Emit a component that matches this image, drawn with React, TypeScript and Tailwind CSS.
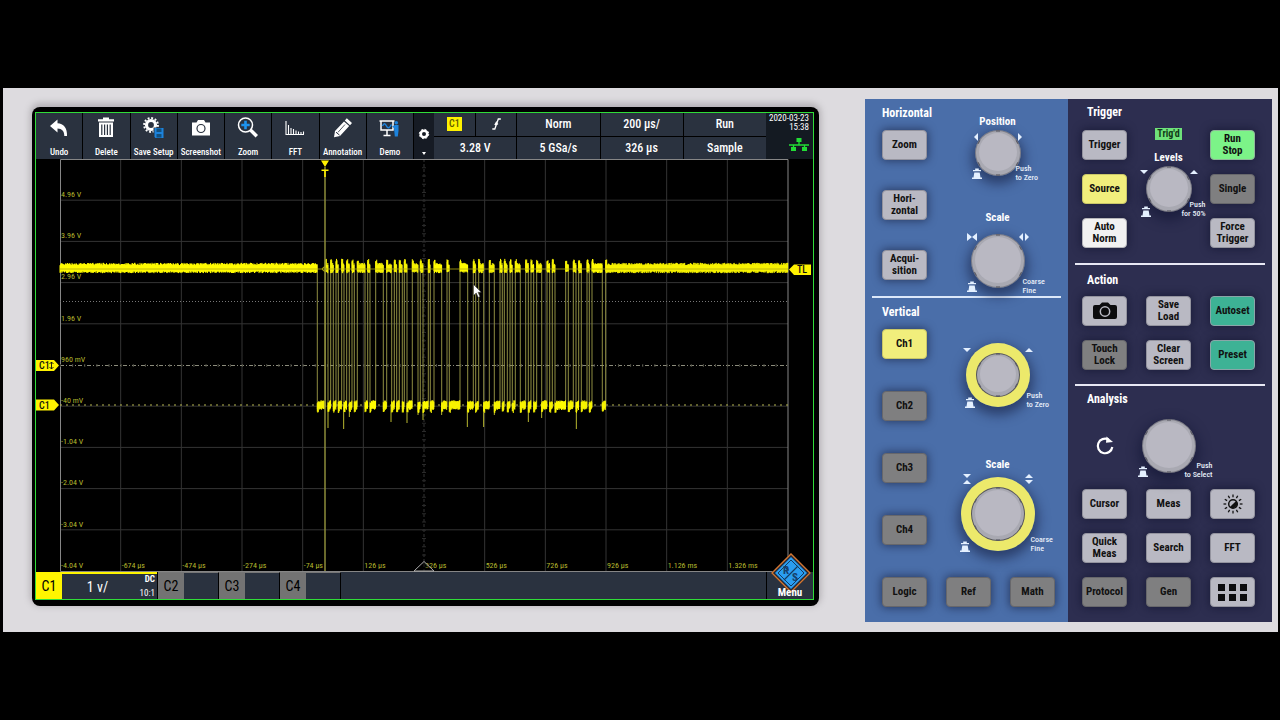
import type { ReactNode } from "react";
import clsx from "clsx";

type Tone = "light" | "gray" | "yellow" | "white" | "green" | "teal";

const TONES: Record<Tone, string> = {
  light: "bg-[#b9b9c3] border-[#93939e]",
  gray: "bg-[#7f7f80] border-[#67676b]",
  yellow: "bg-[#f1ee7c] border-[#c9c668]",
  white: "bg-[#f1f1f1] border-[#b5b5ba]",
  green: "bg-[#7cf388] border-[#8fb898]",
  teal: "bg-[#3db295] border-[#8aa5a8]",
};

// Low phases of the decoded burst, in thirds of a plot unit after x = 240
const LOW_PHASES: [number, number][] = [
  [52, 76], [84, 92], [100, 108], [115, 125], [132, 140], [148, 156], [163, 172],
  [195, 203], [210, 227], [250, 260], [275, 283], [290, 298], [307, 313], [321, 337],
  [354, 361], [369, 385], [391, 402], [425, 441], [448, 480], [503, 520], [527, 536],
  [551, 568], [583, 600], [607, 613], [622, 630], [637, 646], [661, 677], [685, 693],
  [701, 710], [725, 741], [749, 757], [765, 797], [805, 820], [828, 836], [844, 861],
  [868, 876], [907, 917],
];

// Undershoot spikes: position in the same thirds, depth in plot units
const SPIKES: [number, number][] = [
  [84, 269], [131, 270], [148, 258], [273, 263], [321, 264], [369, 261], [354, 256],
  [425, 256], [502, 268], [551, 268], [685, 263], [725, 259], [829, 270], [583, 256],
];

const toX = (third: number) => 240 + third / 3;

// Deterministic noise so the trace looks the same on every render
const noise = (n: number) => {
  const v = Math.sin(n * 127.1) * 43758.5453;
  return v - Math.floor(v);
};

function buildTrace() {
  let body = "";
  let edges = "";
  let cursor = 0;

  const band = (from: number, to: number, high: boolean) => {
    for (let x = from; x < to; x += 0.5) {
      const a = noise(x * 2 + (high ? 0 : 900));
      const b = noise(x * 3 + 41);
      const near = x - from < 1.5 && from > 0;
      const top = high ? 106.2 - a * 2.4 - (near ? 4 : 0) : 243.2 - a * 2 + (near ? 1 : 0);
      const bottom = high ? 112 + b * 2.2 : 249 + b * 2 + (near ? 3 : 0);
      body += `M${x.toFixed(1)} ${top.toFixed(1)}V${bottom.toFixed(1)}`;
    }
  };

  LOW_PHASES.forEach(([start, end]) => {
    const x1 = toX(start);
    const x2 = toX(end);
    band(cursor, x1, true);
    band(x1, x2, false);
    edges += `M${x1.toFixed(1)} 106V250M${x2.toFixed(1)} 103V248`;
    cursor = x2;
  });
  band(cursor, 728, true);

  return { body, edges };
}

const TRACE = buildTrace();

const V_LABELS = ["4.96 V", "3.96 V", "2.96 V", "1.96 V", "960 mV", "-40 mV", "-1.04 V", "-2.04 V", "-3.04 V", "-4.04 V"];
const T_LABELS = ["-674 µs", "-474 µs", "-274 µs", "-74 µs", "126 µs", "326 µs", "526 µs", "726 µs", "926 µs", "1.126 ms", "1.326 ms"];

const TOOLS: { label: string; icon: ReactNode }[] = [
  {
    label: "Undo",
    icon: <path d="M3 9 10.500 2.500v3.700c6 .4 10 4.600 9.500 12.800h-2.700c0-5-2.300-7.300-6.800-7.500v4z" fill="#fff" />,
  },
  {
    label: "Delete",
    icon: (
      <g fill="#fff">
        <path d="M9 .5h6v1.700h5v2.300H4V2.200h5z" />
        <path d="M5 5.500h14v14.500H5z" />
        <path d="M7.800 7.500v10.500M10.600 7.500v10.500M13.400 7.500v10.500M16.200 7.500v10.500" stroke="#2a323f" strokeWidth="1.200" />
      </g>
    ),
  },
  {
    label: "Save Setup",
    icon: (
      <g>
        <circle cx="9" cy="8" r="4.500" fill="none" stroke="#fff" strokeWidth="3.200" />
        <circle cx="9" cy="8" r="6.900" fill="none" stroke="#fff" strokeWidth="2" strokeDasharray="1.900 1.713" />
        <path d="M11.500 10.500H22V21H11.500z" fill="#2a323f" />
        <path d="M12.500 11h9v10h-8l-1-1z" fill="#1d83dc" />
        <path d="M14.500 11.500h5v3.500h-5zM14.500 17h5v3.500h-5z" fill="#12507f" />
      </g>
    ),
  },
  {
    label: "Screenshot",
    icon: (
      <g>
        <path d="M3 5.500h4.500L9 3h6l1.500 2.500H21v13H3z" fill="#fff" />
        <circle cx="12" cy="11.500" r="4" fill="none" stroke="#2a323f" strokeWidth="1.200" />
      </g>
    ),
  },
  {
    label: "Zoom",
    icon: (
      <g fill="none">
        <circle cx="9.500" cy="8" r="7" stroke="#fff" strokeWidth="1.500" />
        <path d="M9.500 3.800v8.400M5.300 8h8.400" stroke="#1d93ee" strokeWidth="2.600" />
        <path d="m14.500 13 6.300 6.300" stroke="#fff" strokeWidth="3.400" />
      </g>
    ),
  },
  {
    label: "FFT",
    icon: (
      <path
        d="M3 4v13.500h18M5.500 8v9M8 11v6M10.500 12v5M13 13.500V17M15.500 14.500V17M18 15v2M20.500 14.500V17"
        stroke="#fff"
        strokeWidth="1.100"
        fill="none"
      />
    ),
  },
  {
    label: "Annotation",
    icon: (
      <g>
        <path d="M15.800 1.300 21 6l-2 2.200-5.200-4.700zM13 4.400l5.200 4.700L9 19l-6 1.300L4 14z" fill="#fff" />
        <path d="m5 15.200 3.600 3" stroke="#2a323f" strokeWidth="1" />
        <path d="m14 7.500-7 7.800" stroke="#2a323f" strokeWidth=".8" />
      </g>
    ),
  },
  {
    label: "Demo",
    icon: (
      <g fill="none">
        <path d="M1.500 4h15M3 4v9h12V4M9 13v5M5.500 18.500h7" stroke="#fff" strokeWidth="1.500" />
        <path d="M4.500 9c1.500-3 2.500-3 4 0s3 2 5-1.500" stroke="#1d83dc" strokeWidth="1.500" />
        <circle cx="18.300" cy="5.800" r="1.800" fill="#1d83dc" />
        <path d="M14 9.500l3-1.500h3.500v6l-.7 5.500h-3L16 11z" fill="#1d83dc" />
      </g>
    ),
  },
];

function Toolbar() {
  return (
    <header className="grid grid-cols-[378fr_20fr_332fr_47fr] h-[46px] text-white">
      <nav className="grid grid-cols-8">
        {TOOLS.map((tool) => (
          <button
            key={tool.label}
            className="flex flex-col items-center justify-between pt-1 bg-[#2a323f] border-r border-black"
          >
            <svg viewBox="0 0 24 22" className="h-[22px] w-6">{tool.icon}</svg>
            <span className="text-[9px] leading-[14px] font-medium whitespace-nowrap">{tool.label}</span>
          </button>
        ))}
      </nav>

      <button aria-label="Toolbar settings" className="flex flex-col items-center justify-end gap-3 pb-1 bg-[#161b24]">
        <svg viewBox="0 0 12 12" className="size-3">
          <circle cx="6" cy="6" r="3.300" fill="none" stroke="#fff" strokeWidth="2.600" />
          <circle cx="6" cy="6" r="4.700" fill="none" stroke="#fff" strokeWidth="1" strokeDasharray="1.850 1.850" />
        </svg>
        <svg viewBox="0 0 4 3" className="w-1 h-[3px]"><path d="M0 0h4L2 3z" fill="#fff" /></svg>
      </button>

      <div className="grid grid-cols-4 grid-rows-2 gap-px text-[12px] leading-4 font-medium *:bg-[#2a323f] *:flex *:items-center *:justify-center">
        <div>
          <span className="flex-1 flex justify-center items-center h-full border-r border-black">
            <span className="bg-[#fff200] text-[#5d5800] text-[10px] leading-[14px] px-0.5">C1</span>
          </span>
          <svg viewBox="0 0 12 14" className="flex-1 h-3.5">
            <path d="M2 12h2.500L8 2h2.500M4.500 8l1.500-2.500 1.500 2" stroke="#fff" strokeWidth="1.300" fill="none" />
          </svg>
        </div>
        <div>Norm</div>
        <div>200 µs/</div>
        <div>Run</div>
        <div>3.28 V</div>
        <div>5 GSa/s</div>
        <div>326 µs</div>
        <div>Sample</div>
      </div>

      <div className="flex flex-col items-end bg-[#141a22] pr-1 pt-px text-[9px] leading-[9px] whitespace-nowrap">
        <span>2020-03-23</span>
        <span>15:38</span>
        <svg viewBox="0 0 20 14" className="w-5 h-3.5 mt-1.5">
          <path d="M7.500 0h5v4h-5zM2 9h5v4H2zM13 9h5v4h-5z" fill="#22dd35" />
          <path d="M0 7h20M10 4v3M4.500 7v2M15.500 7v2" stroke="#22dd35" strokeWidth="1.300" />
        </svg>
      </div>
    </header>
  );
}

function Plot() {
  const columns = Array.from({ length: 11 }, (_, i) => ((i + 1) * 728) / 12);
  const rows = Array.from({ length: 9 }, (_, i) => (i + 1) * 41.2);

  return (
    <svg viewBox="-24 0 777 413" className="block w-full">
      <g stroke="#343434">
        {columns.map((x) => (
          <path key={x} d={`M${x} 0V412`} strokeDasharray={x === 364 ? "3 2" : undefined} />
        ))}
        {rows.map((y) => (y === 206 ? null : <path key={y} d={`M0 ${y}H728`} />))}
        <path d="M364 0V412" strokeWidth="4" strokeDasharray="1 7.240" stroke="#2a2a2a" />
      </g>
      <path d="M0.500 412.500V.5H728V412.500z" fill="none" stroke="#868686" />
      <path d="M0 142.500H728" stroke="#777" strokeDasharray="1 2" />
      <path d="M0 206.500H728" stroke="#8c8c7c" strokeDasharray="4 2 1 2" />
      <path d="M0 206.500H728" stroke="#4a4a40" strokeWidth="3" strokeDasharray="1 11.130" />
      <path d="M0 246H728" stroke="#b6b650" strokeDasharray="2 4" />

      <g fill="#b5b82e" fontSize="8">
        {V_LABELS.map((label, i) => (
          <text key={label} x="1" y={38 + i * 41.2}>{label}</text>
        ))}
        {T_LABELS.map((label, i) => (
          <text key={label} x={columns[i] + 1} y="409">{label}</text>
        ))}
      </g>

      <path d="M354 412 364 402.500 374 412z" fill="#000" fillOpacity=".4" stroke="#aaa" />

      {/* channel 1 trace */}
      <path d={TRACE.edges} stroke="#8f8e42" />
      {SPIKES.map(([x, depth]) => (
        <path key={x} d={`M${toX(x)} 246V${depth}`} stroke="#b9b830" />
      ))}
      <path d={TRACE.body} stroke="#fffb00" strokeWidth="1" />
      <path d="M0 110H728" stroke="#b3ab12" strokeWidth=".8" />

      {/* trigger position and level */}
      <path d="M265 8V412" stroke="#8d8c3a" strokeWidth="1.500" />
      <path d="M261 1.500h8L265 8zM261.500 10.500h7v1.500h-2.700v6h-1.600v-6h-2.700z" fill="#fff200" />
      <circle cx="264.500" cy="110" r="2" fill="none" stroke="#b3ab12" />
      <path d="M729 110.500 734 105.500H751V116H734z" fill="#fff200" />
      <path d="M-24 201h18l5 5.500-5 5.500h-18zM-24 240.500h18l5 5.500-5 5.500h-18z" fill="#fff200" />
      <g fill="#111" fontSize="10" fontWeight="500">
        <text x="737" y="114">TL</text>
        <text x="-21" y="210">C1</text>
        <text x="-21" y="249.500">C1</text>
      </g>
      <path d="M-8.500 203v7M-10.500 205l2-2 2 2M-10.500 208l2 2 2-2" stroke="#111" fill="none" strokeWidth=".9" />

      <path d="M413.500 125.500v11l2.700-2.500 2 4.500 1.800-.9-2-4.300h3.300z" fill="#fff" stroke="#222" strokeWidth=".5" />
    </svg>
  );
}

function ChannelBar() {
  return (
    <footer className="flex h-[27px] bg-[#2a323f] text-black text-[14px] leading-5">
      <button className="flex w-[122px] border-r border-black">
        <span className="flex w-[26px] h-full items-center justify-center bg-[#fff500]">C1</span>
        <span className="relative flex flex-1 h-full items-center justify-center pr-6 text-white border-t-2 border-t-[#fff500]">
          1 v/
          <span className="absolute right-0.5 inset-y-0 flex flex-col justify-between text-[9px] leading-[11px] text-right">
            <b>DC</b>
            <span>10:1</span>
          </span>
        </span>
      </button>
      {["C2", "C3", "C4"].map((channel) => (
        <button key={channel} className="w-[61px] flex border-r border-black border-t border-t-[#777]">
          <span className="flex w-[26px] h-full items-center justify-center bg-[#737373]">{channel}</span>
        </button>
      ))}
      <button className="relative ml-auto w-[47px] border-l border-black text-white">
        <svg viewBox="0 0 40 40" className="absolute bottom-1.5 left-1 size-10">
          <path d="M20 0 40 20 20 40 0 20z" fill="#20283a" />
          <path d="M20 1 39 20 20 39 1 20z" fill="none" stroke="#d9772c" strokeWidth="1.300" />
          <path d="M20 4 36 20 20 36 4 20z" fill="#2a9df0" />
          <path d="M20 7 33 20 20 33 7 20z" fill="none" stroke="#163a5e" strokeWidth="1" />
          <path d="M27 13 13 27M13.500 13.500l4 4M22.500 22.500l4 4" stroke="#163a5e" strokeWidth="1.200" />
          <g fill="#16406c" fontWeight="700" fontSize="11">
            <text x="12" y="21">R</text>
            <text x="21" y="28">S</text>
          </g>
        </svg>
        <span className="absolute inset-x-0 bottom-0 text-[11px] leading-3 font-bold">Menu</span>
      </button>
    </footer>
  );
}

function Key({ tone = "light", label, children }: { tone?: Tone; label?: string; children: ReactNode }) {
  return (
    <button
      aria-label={label}
      className={clsx(
        "flex items-center justify-center w-[45px] h-[30px] shrink-0 rounded border",
        "text-[11px] leading-3 font-bold text-center whitespace-pre text-[#111] shadow-[0_0_8px_1px_rgba(10,12,35,0.5)]",
        TONES[tone],
      )}
    >
      {children}
    </button>
  );
}

type Marks = "sides" | "squeeze" | "updown" | "stretch";

const MARKS: Record<Marks, [string, string]> = {
  sides: ["M2-4v8l-4-4z", "M-2-4v8l4-4z"],
  squeeze: ["M-5-4v8l5-4zM5-4v8l-5-4z", "M-1-4v8l-4-4zM1-4v8l4-4z"],
  updown: ["M-4-2h8L0 2z", "M-4 2h8L0-2z"],
  stretch: ["M-4-5h8L0-1zM-4 5h8L0 1z", "M-4-1h8L0-5zM-4 1h8L0 5z"],
};

interface KnobProps {
  label: string;
  radius: number;
  ring?: number;
  marks?: Marks;
  markX?: number;
  markY?: number;
  push: number;
  hint: string;
  hintClass: string;
}

function Knob({ label, radius, ring = 0, marks, markX = 0, markY = 0, push, hint, hintClass }: KnobProps) {
  const size = 2 * Math.max(radius, ring);
  const r = radius;
  return (
    <div className="relative shrink-0" style={{ width: size, height: size }}>
      <button aria-label={label} className="block size-full rounded-full shadow-[0_5px_12px_3px_rgba(12,16,45,0.5)]">
        <svg viewBox={`${-size / 2} ${-size / 2} ${size} ${size}`} className="block size-full overflow-visible">
          {ring > 0 && <circle r={ring} fill="#ece96b" />}
          <circle r={r} fill={ring ? "#55555c" : "#7d7d86"} />
          <circle r={r - 1} fill="#a9a9b2" />
          <circle r={r - 4} cy="-1" fill="#b9b8c2" />
          {[0, 60, 120, 180, 240, 300].map((a) => (
            <path key={a} d={`M-2 ${-r + 1}h4`} transform={`rotate(${a})`} stroke="#5c5c66" strokeWidth="1.200" />
          ))}
          {marks && (
            <g fill="#e4f0ff">
              <path transform={`translate(${-markX} ${-markY})`} d={MARKS[marks][0]} />
              <path transform={`translate(${markX} ${-markY})`} d={MARKS[marks][1]} />
            </g>
          )}
          <path
            transform={`translate(${-push} ${push})`}
            d="M-5 5v-1.500h1.500l.8-5h5.400l.8 5h1.500v1.500zM-4-2.700v-1.300h2.200v-1.500h3.600v1.500h2.200v1.300z"
            fill="#e4f0ff"
          />
        </svg>
      </button>
      <span className={clsx("absolute text-[8px] leading-[9px] font-medium whitespace-pre text-[#e6edf8]", hintClass)}>
        {hint}
      </span>
    </div>
  );
}

function Heading({ children }: { children: ReactNode }) {
  return <h2 className="text-[12px] leading-4 font-bold text-white whitespace-nowrap">{children}</h2>;
}

function KnobLabel({ children }: { children: ReactNode }) {
  return <h3 className="text-[11px] leading-4 font-bold text-white">{children}</h3>;
}

function BluePanel() {
  return (
    <section className="w-[203px] bg-[#4a6ea9]">
      <div className="flex pl-[17px] pb-2">
        <div className="w-[45px] pt-1.5">
          <Heading>Horizontal</Heading>
          <div className="flex flex-col gap-[30px] mt-[9px]">
            <Key>Zoom</Key>
            <Key>{"Hori-\nzontal"}</Key>
            <Key>{"Acqui-\nsition"}</Key>
          </div>
        </div>
        <div className="flex-1 flex flex-col items-center pt-[15px]">
          <KnobLabel>Position</KnobLabel>
          <Knob label="Horizontal position" radius={23} marks="sides" markX={22} markY={16} push={21} hint={"Push\nto Zero"} hintClass="left-[41px] top-[34px]" />
          <div className="h-[34px]" />
          <KnobLabel>Scale</KnobLabel>
          <div className="h-2" />
          <Knob label="Horizontal scale" radius={27} marks="squeeze" markX={26} markY={24} push={26} hint={"Coarse\nFine"} hintClass="left-[52px] top-[43px]" />
        </div>
      </div>

      <hr className="mx-[7px] border-0 h-0.5 bg-[#dce8fa]" />

      <div className="flex pl-[17px]">
        <div className="w-[45px] pt-1.5">
          <Heading>Vertical</Heading>
          <div className="flex flex-col gap-8 mt-[9px]">
            <Key tone="yellow">Ch1</Key>
            <Key tone="gray">Ch2</Key>
            <Key tone="gray">Ch3</Key>
            <Key tone="gray">Ch4</Key>
          </div>
        </div>
        <div className="flex-1 flex flex-col items-center pt-[45px]">
          <Knob label="Vertical position" radius={22} ring={32} marks="updown" markX={31} markY={25} push={28} hint={"Push\nto Zero"} hintClass="left-[61px] top-[48px]" />
          <div className="h-[50px]" />
          <KnobLabel>Scale</KnobLabel>
          <div className="h-1" />
          <Knob label="Vertical scale" radius={27} ring={37} marks="stretch" markX={31} markY={35} push={33} hint={"Coarse\nFine"} hintClass="left-[70px] top-[58px]" />
        </div>
      </div>

      <div className="flex gap-[19px] pl-[17px] pt-[26px] pb-[15px]">
        <Key tone="gray">Logic</Key>
        <Key tone="gray">Ref</Key>
        <Key tone="gray">Math</Key>
      </div>
    </section>
  );
}

const KEY_GRID = "grid grid-cols-[45px_45px_45px] gap-x-[19px] gap-y-[14px] pl-3.5";

function DarkPanel() {
  return (
    <section className="w-[204px] bg-[#2d2e50]">
      <div className="pl-[19px] pt-[5px] pb-2.5"><Heading>Trigger</Heading></div>
      <div className={KEY_GRID}>
        <Key>Trigger</Key>
        <div className="row-span-3 flex flex-col items-center">
          <span className="-mt-0.5 px-0.5 bg-[#6ee27a] text-[#103a18] text-[10px] leading-3 font-bold whitespace-nowrap">Trig'd</span>
          <div className="h-2.5" />
          <KnobLabel>Levels</KnobLabel>
          <Knob label="Trigger level" radius={23} marks="updown" markX={25} markY={17} push={23} hint={"Push\nfor 50%"} hintClass="-right-3.5 top-[34px] text-right" />
        </div>
        <Key tone="green">{"Run\nStop"}</Key>
        <Key tone="yellow">Source</Key>
        <Key tone="gray">Single</Key>
        <Key tone="white">{"Auto\nNorm"}</Key>
        <Key>{"Force\nTrigger"}</Key>
      </div>

      <hr className="mx-[7px] mt-[15px] border-0 h-0.5 bg-[#e8e8f4]" />

      <div className="pl-[19px] pt-[7px] pb-2"><Heading>Action</Heading></div>
      <div className={KEY_GRID}>
        <Key label="Screenshot">
          <svg viewBox="0 0 24 18" className="w-6 h-[18px]">
            <path d="M2 3h4.500L9 .5h6L17.500 3H22a2 2 0 0 1 2 2v10a2 2 0 0 1-2 2H2a2 2 0 0 1-2-2V5a2 2 0 0 1 2-2z" fill="#0c0c0e" />
            <circle cx="12" cy="9.500" r="4.700" fill="none" stroke="#b9b9c3" strokeWidth="1.500" />
          </svg>
        </Key>
        <Key>{"Save\nLoad"}</Key>
        <Key tone="teal">Autoset</Key>
        <Key tone="gray">{"Touch\nLock"}</Key>
        <Key>{"Clear\nScreen"}</Key>
        <Key tone="teal">Preset</Key>
      </div>

      <hr className="mx-[7px] mt-3.5 border-0 h-0.5 bg-[#e8e8f4]" />

      <div className="pl-[19px] pt-[5px] pb-3"><Heading>Analysis</Heading></div>
      <div className={clsx(KEY_GRID, "items-center mb-4")}>
        <svg viewBox="0 0 20 20" className="size-5 justify-self-center">
          <path d="M13.500 3.500A7.300 7.300 0 1 0 17.300 11" stroke="#fff" strokeWidth="2.200" fill="none" />
          <path d="m11.500.5 6.500 5.500-7 .8z" fill="#fff" />
        </svg>
        <div className="flex justify-center">
          <Knob label="Select" radius={27} push={26} hint={"Push\nto Select"} hintClass="-right-[17px] top-[42px] text-right" />
        </div>
      </div>
      <div className={clsx(KEY_GRID, "pb-[15px]")}>
        <Key>Cursor</Key>
        <Key>Meas</Key>
        <Key label="Intensity">
          <svg viewBox="-10 -10 20 20" className="size-5">
            {[0, 30, 60, 90, 120, 150, 180, 210, 240, 270, 300, 330].map((a) => (
              <path key={a} d="M0-9.500v2.700" transform={`rotate(${a})`} stroke="#111" strokeWidth="1.300" />
            ))}
            <circle r="4.300" fill="none" stroke="#111" strokeWidth="1.500" />
            <path d="M-3.100 3.100A4.400 4.400 0 0 0 3.100-3.100z" fill="#111" />
          </svg>
        </Key>
        <Key>{"Quick\nMeas"}</Key>
        <Key>Search</Key>
        <Key>FFT</Key>
        <Key tone="gray">Protocol</Key>
        <Key tone="gray">Gen</Key>
        <Key label="Apps">
          <span className="grid grid-cols-3 gap-x-1 gap-y-[3px]">
            {[0, 1, 2, 3, 4, 5].map((i) => (
              <span key={i} className="size-[7px] bg-[#0c0c0e]" />
            ))}
          </span>
        </Key>
      </div>
    </section>
  );
}

export default function App() {
  return (
    <div className="min-h-screen flex flex-col justify-center bg-black font-['Roboto_Condensed','Liberation_Sans_Narrow','Liberation_Sans',sans-serif]">
      <main className="flex items-start gap-[46px] ml-[3px] mr-0.5 pl-[29px] pr-1.5 pt-[11px] pb-2.5 bg-[#dddbdf]">
        <div className="flex-1 mt-2 pl-[3px] pr-[5px] pt-[5px] pb-1.5 rounded-lg bg-black shadow-[0_-2px_6px_2px_rgba(120,115,120,0.4)]">
          <div className="border border-[#30dd38] bg-black">
            <Toolbar />
            <Plot />
            <ChannelBar />
          </div>
        </div>
        <div className="flex shrink-0">
          <BluePanel />
          <DarkPanel />
        </div>
      </main>
    </div>
  );
}
